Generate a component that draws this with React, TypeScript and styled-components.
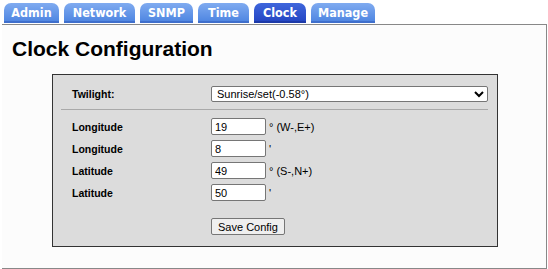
import styled, { createGlobalStyle } from "styled-components";

const GlobalStyle = createGlobalStyle`
  html, body {
    margin: 0;
    padding: 0;
    background: #ffffff;
    font-family: "Liberation Sans", Arial, sans-serif;
  }
`;

const TabBar = styled.nav`
  display: flex;
  align-items: flex-start;
  gap: 5px;
  height: 24px;
  padding: 3px 0 0 4px;
  box-sizing: border-box;
`;

const Tab = styled.a<{ $active?: boolean; $width: number }>`
  width: ${({ $width }) => $width}px;
  height: 20px;
  box-sizing: border-box;
  display: flex;
  align-items: center;
  justify-content: center;
  border-radius: 7px 7px 0 0;
  border-bottom: 2px solid ${({ $active }) => ($active ? "#1d3aa8" : "#3f6fcc")};
  background: ${({ $active }) =>
    $active
      ? "linear-gradient(#3f66dc, #2547c4)"
      : "linear-gradient(#80abf0, #5087e2)"};
  color: #ffffff;
  font-family: "DejaVu Sans Condensed", "DejaVu Sans", Verdana, sans-serif;
  font-weight: 700;
  font-size: 12.5px;
  text-decoration: none;
  cursor: pointer;
`;

const Panel = styled.main`
  margin-left: 2px;
  width: 545px;
  height: 245px;
  box-sizing: border-box;
  border: 1px solid #888888;
  border-left: none;
  background: #fcfcfc;
  padding-top: 12px;
`;

const Heading = styled.h1`
  margin: 0 0 0 10px;
  font-size: 21px;
  line-height: 24px;
  font-weight: 700;
  color: #000000;
`;

const FormBox = styled.section`
  margin: 13px 0 0 50px;
  width: 446px;
  height: 173px;
  box-sizing: border-box;
  border: 1px solid #333333;
  background: #dcdcdc;
  padding-top: 11px;
`;

const Row = styled.div`
  display: flex;
  align-items: center;
  height: 17px;
  padding-left: 19px;
`;

const TwilightRow = styled(Row)`
  height: 16px;
`;

const Rows = styled.div`
  display: flex;
  flex-direction: column;
  gap: 5px;
`;

const Label = styled.label`
  width: 139px;
  flex-shrink: 0;
  font-size: 10.5px;
  font-weight: 700;
  color: #000000;
`;

const Select = styled.select`
  width: 277px;
  height: 16px;
  box-sizing: border-box;
  padding: 0 0 0 1px;
  border: 1px solid #767676;
  border-radius: 2px;
  background: #ffffff;
  font-family: "Liberation Sans", Arial, sans-serif;
  font-size: 11px;
  color: #000000;
`;

const Separator = styled.hr`
  margin: 7px 9px 8px 8px;
  border: none;
  border-top: 1px solid #a9a9a9;
  height: 0;
`;

const NumberInput = styled.input`
  width: 55px;
  height: 17px;
  box-sizing: border-box;
  padding: 1px 3px;
  border: 1px solid #767676;
  border-radius: 2px;
  background: #ffffff;
  font-family: "Liberation Sans", Arial, sans-serif;
  font-size: 11px;
  color: #000000;
`;

const Unit = styled.span`
  margin-left: 3px;
  font-size: 11px;
  color: #000000;
`;

const ButtonRow = styled(Row)`
  margin-top: 17px;
  padding-left: 158px;
`;

const SaveButton = styled.button`
  height: 17px;
  box-sizing: border-box;
  padding: 0 6px;
  border: 1px solid #767676;
  border-radius: 2px;
  background: #efefef;
  font-family: "Liberation Sans", Arial, sans-serif;
  font-size: 11px;
  color: #000000;
  cursor: pointer;
`;

const tabs = [
  { name: "Admin", width: 55 },
  { name: "Network", width: 71 },
  { name: "SNMP", width: 53 },
  { name: "Time", width: 51 },
  { name: "Clock", width: 52 },
  { name: "Manage", width: 64 },
];

const fields = [
  { label: "Longitude", value: "19", unit: "° (W-,E+)" },
  { label: "Longitude", value: "8", unit: "'" },
  { label: "Latitude", value: "49", unit: "° (S-,N+)" },
  { label: "Latitude", value: "50", unit: "'" },
];

export default function App() {
  return (
    <>
      <GlobalStyle />
      <TabBar>
        {tabs.map((t) => (
          <Tab key={t.name} $width={t.width} $active={t.name === "Clock"}>
            {t.name}
          </Tab>
        ))}
      </TabBar>
      <Panel>
        <Heading>Clock Configuration</Heading>
        <FormBox>
          <TwilightRow>
            <Label>Twilight:</Label>
            <Select defaultValue="sun">
              <option value="sun">Sunrise/set(-0.58°)</option>
              <option value="civil">Civil(-6°)</option>
              <option value="nautic">Nautical(-12°)</option>
              <option value="astro">Astronomical(-18°)</option>
            </Select>
          </TwilightRow>
          <Separator />
          <Rows>
            {fields.map((f, i) => (
              <Row key={i}>
                <Label>{f.label}</Label>
                <NumberInput type="text" defaultValue={f.value} />
                <Unit>{f.unit}</Unit>
              </Row>
            ))}
          </Rows>
          <ButtonRow>
            <SaveButton type="button">Save Config</SaveButton>
          </ButtonRow>
        </FormBox>
      </Panel>
    </>
  );
}
